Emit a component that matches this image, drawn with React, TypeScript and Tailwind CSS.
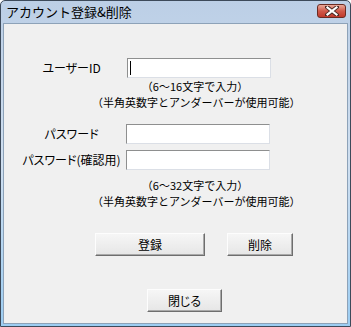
import React from 'react';

const jp = "font-['Noto_Sans_CJK_JP','Noto_Sans',sans-serif]";

const TextBox: React.FC<{ caret?: boolean }> = ({ caret }) => (
  <div className="w-[144px] h-[20px] bg-white border border-t-[#8e8f8f] border-l-[#8e8f8f] border-b-[#dbdfe6] border-r-[#dbdfe6] flex items-center pl-[2px]">
    {caret && <div className="w-px h-[14px] bg-black" />}
  </div>
);

const Button: React.FC<{ label: string; width: string }> = ({ label, width }) => (
  <button
    className={`${width} h-[23px] flex items-center justify-center text-[12px] text-black bg-gradient-to-b from-[#f6f6f6] to-[#e6e6e6] border border-t-[#fdfdfd] border-l-[#fdfdfd] border-b-[#6e6e6e] border-r-[#6e6e6e] shadow-[inset_-1px_-1px_0_#a9a9a9] [font-feature-settings:'palt']`}
  >
    {label}
  </button>
);

// two-line hint under the input fields
const Hint: React.FC<{ range: string; className?: string }> = ({ range, className }) => (
  <div className={`ml-[88px] w-[206px] text-center text-[11px] leading-[16px] whitespace-nowrap ${className ?? ''}`}>
    <div>（{range}文字で入力）</div>
    <div>（半角英数字とアンダーバーが使用可能）</div>
  </div>
);

const App: React.FC = () => (
  <div className={`w-[351px] h-[327px] flex flex-col bg-gradient-to-b from-[#bccfe6] via-[#cfdff0] to-[#9ccdf2] border border-[#3d4a5a] rounded-t-[5px] ${jp}`}>
    {/* title bar */}
    <div className="h-[22px] flex items-start justify-between pl-[5px] pr-[4px]">
      <span className="text-[13px] leading-[22px] text-black">アカウント登録&amp;削除</span>
      <div className="mt-[3px] w-[29px] h-[14px] rounded-[3px] border border-[#6b2b22] bg-gradient-to-b from-[#e9a99a] via-[#d0594a] to-[#c0392b] flex items-center justify-center">
        <svg width="14" height="10" viewBox="0 0 14 10">
          <path d="M2 1 L12 9 M12 1 L2 9" stroke="#4a2a24" strokeWidth="4" strokeLinecap="square" />
          <path d="M2.5 1.5 L11.5 8.5 M11.5 1.5 L2.5 8.5" stroke="#ffffff" strokeWidth="2.2" strokeLinecap="square" />
        </svg>
      </div>
    </div>

    {/* client area */}
    <div className="flex-1 mx-[2px] mb-[2px] bg-[#f0f0f0] border border-[#8da2b8] flex flex-col text-[12px] text-black">
      <div className="mt-[34px] flex items-center">
        <div className="w-[99px] ml-[18px] text-center [font-feature-settings:'palt']">ユーザーID</div>
        <div className="ml-[6px]">
          <TextBox caret />
        </div>
      </div>
      <Hint range="6～16" />

      <div className="mt-[14px] flex items-center">
        <div className="w-[99px] ml-[18px] text-center [font-feature-settings:'palt']">パスワード</div>
        <div className="ml-[5px]">
          <TextBox />
        </div>
      </div>
      <div className="mt-[6px] flex items-center">
        <div className="w-[99px] ml-[18px] text-center [font-feature-settings:'palt']">パスワード(確認用)</div>
        <div className="ml-[5px]">
          <TextBox />
        </div>
      </div>
      <Hint range="6～32" className="mt-[7px]" />

      <div className="mt-[24px] flex ml-[91px] gap-[22px]">
        <Button label="登録" width="w-[110px]" />
        <Button label="削除" width="w-[66px]" />
      </div>
      <div className="mt-[33px] flex ml-[143px]">
        <Button label="閉じる" width="w-[75px]" />
      </div>
    </div>
  </div>
);

export default App;
